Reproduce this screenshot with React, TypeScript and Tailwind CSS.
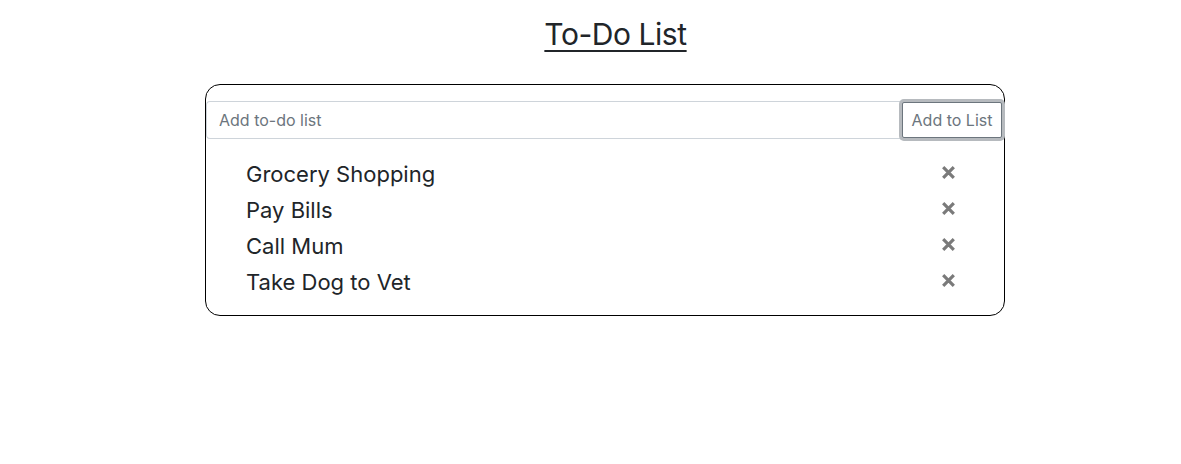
const todos = ['Grocery Shopping', 'Pay Bills', 'Call Mum', 'Take Dog to Vet'];

function CloseIcon() {
  return (
    <svg width="17" height="17" viewBox="0 0 16 16" className="shrink-0">
      <path d="M3 3 L13 13 M13 3 L3 13" stroke="#7a7a7a" strokeWidth="3" strokeLinecap="butt" />
    </svg>
  );
}

export default function App() {
  return (
    <div className="min-h-[464px] bg-white font-['Inter',sans-serif] text-[#212529]">
      <div className="flex justify-center pl-[50px] pt-[13px]">
        <h1 className="text-[30px] font-normal leading-[42px] tracking-[-0.015em] underline decoration-2 underline-offset-[5px]">
          To-Do List
        </h1>
      </div>
      <div className="ml-[205px] mt-[29px] w-[800px] rounded-[15px] border border-black pb-[15px] pt-[16px]">
        <div className="flex items-center">
          <input
            className="h-[38px] flex-1 rounded-l-[4px] border border-r-0 border-[#ced4da] px-3 text-[16px] text-[#495057] outline-none placeholder:text-[#6c757d]"
            placeholder="Add to-do list"
          />
          <button className="mr-[2px] h-[36px] w-[100px] rounded-[2px] border border-[#6c757d] bg-white text-[16px] text-[#6c757d] shadow-[0_0_0_3px_#b6babe]">
            Add to List
          </button>
        </div>
        <ul className="mt-[17px] pl-[40px] pr-[47px]">
          {todos.map((t) => (
            <li key={t} className="flex h-[36px] items-center justify-between text-[22px]">
              <span>{t}</span>
              <span className="-translate-y-[2px]">
                <CloseIcon />
              </span>
            </li>
          ))}
        </ul>
      </div>
    </div>
  );
}
